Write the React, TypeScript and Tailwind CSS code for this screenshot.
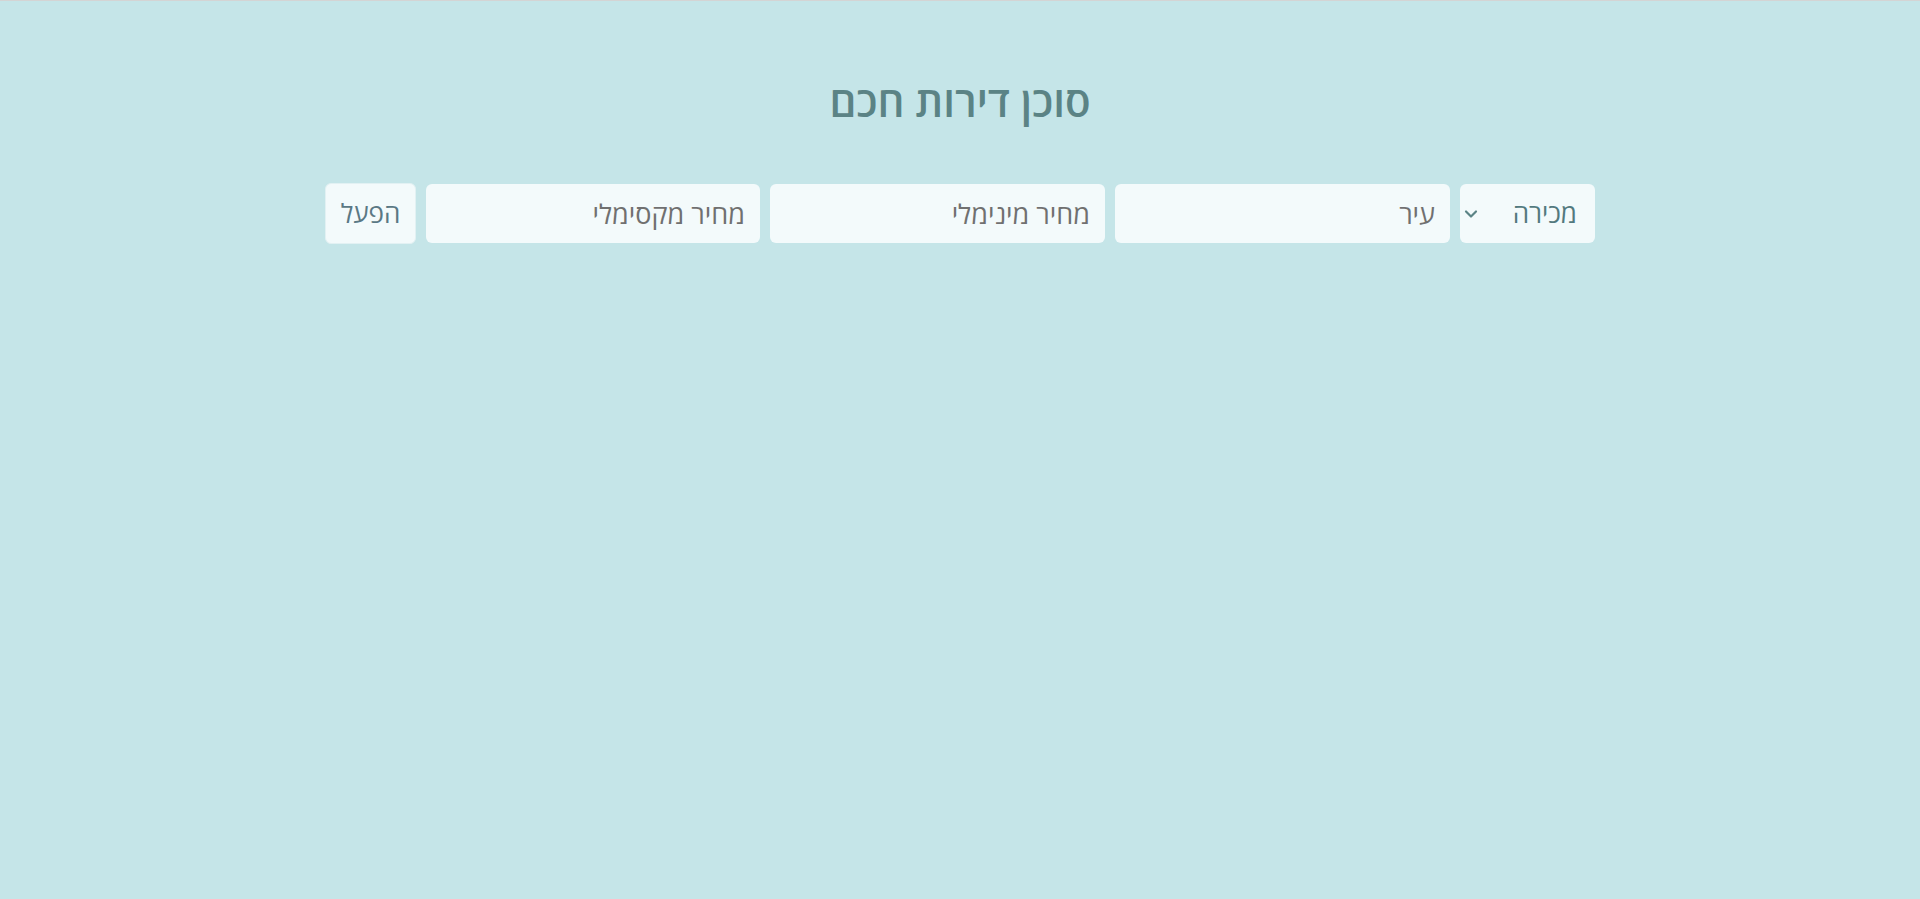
import { ChevronDown } from 'lucide-react'

export default function App() {
  return (
    <div
      dir="rtl"
      className="min-h-[899px] w-full bg-[#c5e5e8] border-t border-[#d4d4d4]"
      style={{ fontFamily: '"Open Sans", "Noto Sans", sans-serif' }}
    >
      <div className="flex flex-col items-center pt-[70px]">
        <h1 className="text-[42px] font-semibold leading-[60px] text-[#5b8385]">סוכן דירות חכם</h1>

        <div className="mt-[52px] flex items-center gap-[10px]">
          <div className="relative">
            <select className="h-[59px] w-[135px] appearance-none rounded-[6px] bg-[#f3fafb] pr-[18px] pl-[36px] text-[26px] text-[#52797e] outline-none">
              <option>מכירה</option>
              <option>השכרה</option>
            </select>
            <ChevronDown
              size={20}
              strokeWidth={2.6}
              className="pointer-events-none absolute left-[1px] top-1/2 -translate-y-1/2 text-[#5b8385]"
            />
          </div>

          <input
            placeholder="עיר"
            className="h-[59px] w-[335px] rounded-[6px] bg-[#f3fafb] px-[15px] text-[27px] text-[#555] placeholder:text-[#707070] outline-none"
          />
          <input
            placeholder="מחיר מינימלי"
            className="h-[59px] w-[335px] rounded-[6px] bg-[#f3fafb] px-[15px] text-[27px] text-[#555] placeholder:text-[#707070] outline-none"
          />
          <input
            placeholder="מחיר מקסימלי"
            className="h-[59px] w-[334px] rounded-[6px] bg-[#f3fafb] px-[15px] text-[27px] text-[#555] placeholder:text-[#707070] outline-none"
          />

          <button className="h-[61px] w-[91px] rounded-[6px] border border-[#e2f1f3] bg-[#f3fafb] text-[26px] text-[#5a7884]">
            הפעל
          </button>
        </div>
      </div>
    </div>
  )
}
